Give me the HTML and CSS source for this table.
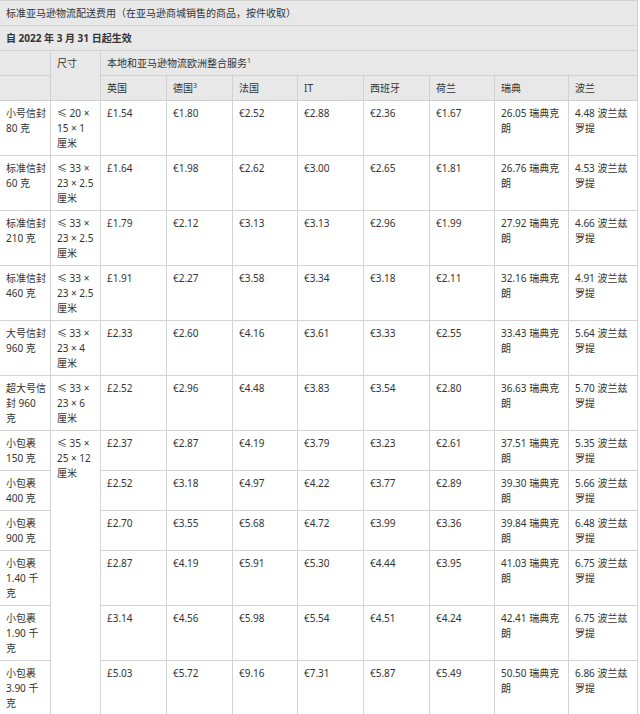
FILE: index.html
```html
<!DOCTYPE html>
<html lang="zh-CN">
<head>
<meta charset="utf-8">
<title>标准亚马逊物流配送费用</title>
<link rel="stylesheet" href="styles.css">
</head>
<body>
<table class="fees">
  <colgroup>
    <col class="c-name"><col class="c-size"><col class="c-66"><col class="c-66"><col class="c-65"><col class="c-66"><col class="c-66"><col class="c-65"><col class="c-se"><col class="c-pl">
  </colgroup>
  <thead>
    <tr class="hd"><th colspan="10">标准亚马逊物流配送费用（在亚马逊商城销售的商品，按件收取）</th></tr>
    <tr class="hd"><th colspan="10" class="bold">自 2022 年 3 月 31 日起生效</th></tr>
    <tr class="hd"><th></th><th rowspan="2">尺寸</th><th colspan="8">本地和亚马逊物流欧洲整合服务<sup>1</sup></th></tr>
    <tr class="hd"><th></th><th>英国</th><th>德国<sup>3</sup></th><th>法国</th><th>IT</th><th>西班牙</th><th>荷兰</th><th>瑞典</th><th>波兰</th></tr>
  </thead>
  <tbody>
    <tr><td>小号信封 80 克</td><td>≤ 20 × 15 × 1 <span class="unit">厘米</span></td><td>£1.54</td><td>€1.80</td><td>€2.52</td><td>€2.88</td><td>€2.36</td><td>€1.67</td><td>26.05 瑞典克朗</td><td>4.48 波兰兹罗提</td></tr>
    <tr><td>标准信封 60 克</td><td>≤ 33 × 23 × 2.5 <span class="unit">厘米</span></td><td>£1.64</td><td>€1.98</td><td>€2.62</td><td>€3.00</td><td>€2.65</td><td>€1.81</td><td>26.76 瑞典克朗</td><td>4.53 波兰兹罗提</td></tr>
    <tr><td>标准信封 210 克</td><td>≤ 33 × 23 × 2.5 <span class="unit">厘米</span></td><td>£1.79</td><td>€2.12</td><td>€3.13</td><td>€3.13</td><td>€2.96</td><td>€1.99</td><td>27.92 瑞典克朗</td><td>4.66 波兰兹罗提</td></tr>
    <tr><td>标准信封 460 克</td><td>≤ 33 × 23 × 2.5 <span class="unit">厘米</span></td><td>£1.91</td><td>€2.27</td><td>€3.58</td><td>€3.34</td><td>€3.18</td><td>€2.11</td><td>32.16 瑞典克朗</td><td>4.91 波兰兹罗提</td></tr>
    <tr><td>大号信封 960 克</td><td>≤ 33 × 23 × 4 <span class="unit">厘米</span></td><td>£2.33</td><td>€2.60</td><td>€4.16</td><td>€3.61</td><td>€3.33</td><td>€2.55</td><td>33.43 瑞典克朗</td><td>5.64 波兰兹罗提</td></tr>
    <tr><td>超大号信封 960 克</td><td>≤ 33 × 23 × 6 <span class="unit">厘米</span></td><td>£2.52</td><td>€2.96</td><td>€4.48</td><td>€3.83</td><td>€3.54</td><td>€2.80</td><td>36.63 瑞典克朗</td><td>5.70 波兰兹罗提</td></tr>
    <tr><td>小包裹 150 克</td><td rowspan="6">≤ 35 × 25 × 12 <span class="unit">厘米</span></td><td>£2.37</td><td>€2.87</td><td>€4.19</td><td>€3.79</td><td>€3.23</td><td>€2.61</td><td>37.51 瑞典克朗</td><td>5.35 波兰兹罗提</td></tr>
    <tr><td>小包裹 400 克</td><td>£2.52</td><td>€3.18</td><td>€4.97</td><td>€4.22</td><td>€3.77</td><td>€2.89</td><td>39.30 瑞典克朗</td><td>5.66 波兰兹罗提</td></tr>
    <tr><td>小包裹 900 克</td><td>£2.70</td><td>€3.55</td><td>€5.68</td><td>€4.72</td><td>€3.99</td><td>€3.36</td><td>39.84 瑞典克朗</td><td>6.48 波兰兹罗提</td></tr>
    <tr><td>小包裹 1.40 千克</td><td>£2.87</td><td>€4.19</td><td>€5.91</td><td>€5.30</td><td>€4.44</td><td>€3.95</td><td>41.03 瑞典克朗</td><td>6.75 波兰兹罗提</td></tr>
    <tr><td>小包裹 1.90 千克</td><td>£3.14</td><td>€4.56</td><td>€5.98</td><td>€5.54</td><td>€4.51</td><td>€4.24</td><td>42.41 瑞典克朗</td><td>6.75 波兰兹罗提</td></tr>
    <tr><td>小包裹 3.90 千克</td><td>£5.03</td><td>€5.72</td><td>€9.16</td><td>€7.31</td><td>€5.87</td><td>€5.49</td><td>50.50 瑞典克朗</td><td>6.86 波兰兹罗提</td></tr>
  </tbody>
</table>
</body>
</html>
```

FILE: styles.css
```css
html, body {
  margin: 0;
  padding: 0;
  background: #ffffff;
}

body {
  font-family: "Noto Sans", "Noto Sans CJK SC", sans-serif;
  font-size: 10px;
  line-height: 15px;
  color: #333333;
}

.fees {
  border-collapse: collapse;
  table-layout: fixed;
  width: 638px;
  margin-left: -1px;
}

.c-name { width: 51px; }
.c-size { width: 50px; }
.c-66 { width: 66px; }
.c-65 { width: 65px; }
.c-se { width: 74px; }
.c-pl { width: 69px; }

.fees th,
.fees td {
  border: 1px solid #d3d3d3;
  padding: 5px 2px 4px 6px;
  text-align: left;
  vertical-align: top;
  font-weight: normal;
  overflow-wrap: normal;
}

.fees .hd th {
  background: #e8e8e8;
  border-color: #d0d0d0;
}

.fees th.bold {
  font-weight: bold;
}

.fees sup {
  font-size: 7px;
  line-height: 0;
  vertical-align: 4px;
}

.fees td {
  background: #ffffff;
}

.unit {
  white-space: nowrap;
}
```
